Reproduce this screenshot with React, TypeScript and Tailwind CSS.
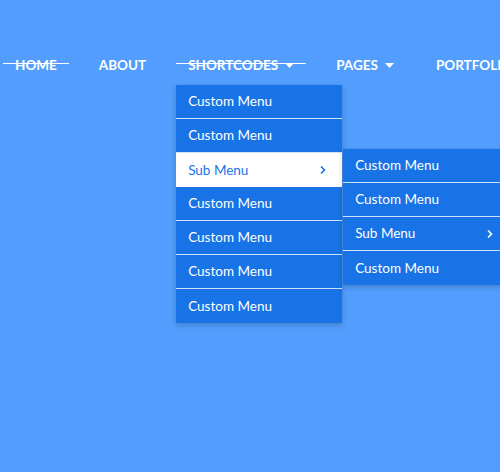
import { ChevronRight } from "lucide-react";

const Caret = () => (
  <svg width="9" height="5" viewBox="0 0 9 5" className="ml-[7px] mt-[1px]">
    <path d="M0 0h9L4.5 5z" fill="white" />
  </svg>
);

const Item = ({ label, active, sub }: { label: string; active?: boolean; sub?: boolean }) => (
  <li
    className={`flex items-center justify-between h-[34px] pl-[12px] pr-[13px] border-b border-[#cfe2fb] last:border-b-0 text-[13.5px] ${
      active ? "bg-white text-[#1873e6]" : "text-white"
    }`}
  >
    <span>{label}</span>
    {sub && <ChevronRight size={12} strokeWidth={3.5} />}
  </li>
);

export default function App() {
  const nav = [
    { label: "HOME", strike: true },
    { label: "ABOUT" },
    { label: "SHORTCODES", strike: true, caret: true, menu: true },
    { label: "PAGES", caret: true },
    { label: "PORTFOLIO" },
  ];
  return (
    <div className="w-[500px] h-[472px] bg-[#529dfd] pt-[53px] pl-[3px]" style={{ fontFamily: 'Lato, sans-serif' }}>
      <ul className="flex gap-[18px]">
        {nav.map((n) => (
          <li key={n.label} className="relative">
            <div className="relative flex items-center px-[12px] h-[24px] text-white font-bold text-[13.5px]">
              {n.label}
              {n.caret && <Caret />}
              {n.strike && <span className="absolute left-0 right-0 top-[10px] h-px bg-white" />}
            </div>
            {n.menu && (
              <ul className="absolute left-0 top-[32px] w-[166px] bg-[#1873e6] shadow-[0_2px_6px_rgba(0,0,0,0.2)]">
                <Item label="Custom Menu" />
                <Item label="Custom Menu" />
                <li className="relative">
                  <ul>
                    <Item label="Sub Menu" active sub />
                  </ul>
                  <ul className="absolute left-[167px] top-[-4px] w-[166px] bg-[#1873e6] shadow-[0_2px_6px_rgba(0,0,0,0.2)]">
                    <Item label="Custom Menu" />
                    <Item label="Custom Menu" />
                    <Item label="Sub Menu" sub />
                    <Item label="Custom Menu" />
                  </ul>
                </li>
                <Item label="Custom Menu" />
                <Item label="Custom Menu" />
                <Item label="Custom Menu" />
                <Item label="Custom Menu" />
              </ul>
            )}
          </li>
        ))}
      </ul>
    </div>
  );
}
